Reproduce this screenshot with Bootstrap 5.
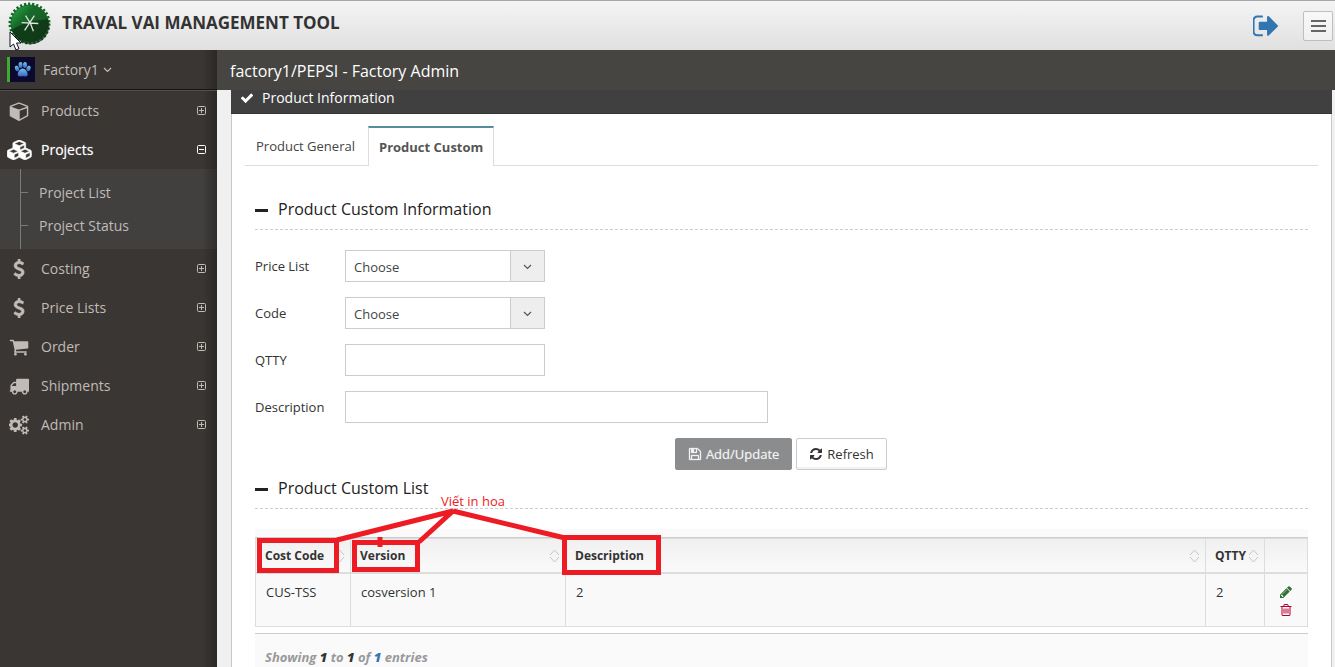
<!DOCTYPE html>
<html lang="en">
<head>
<meta charset="utf-8">
<meta name="viewport" content="width=device-width, initial-scale=1">
<title>Traval Vai Management Tool</title>
<link rel="stylesheet" href="https://cdn.jsdelivr.net/npm/bootstrap@5.3.0/dist/css/bootstrap.min.css">
<style>
body{font-family:"Open Sans",sans-serif;font-size:13px;line-height:20px;color:#333;background:#f0f0f0}
.fa-ico{width:20px;height:20px;fill:currentColor;flex:none}
.fa-ico.wide{width:26px;stroke:currentColor;stroke-width:50}
.fa-ico.mid{width:14px;height:14px}
.fa-ico.small-ico{width:12px;height:12px}
a{text-decoration:none}
.topbar{height:50px;border-top:1px solid #a5a5a5;background:linear-gradient(#f4f4f4,#e0e0e0);padding:0 2px 0 8px}
.brand-mark{width:43px;height:43px;margin-bottom:4px}
.brand-name{font-size:17px;font-weight:700;line-height:24px;color:#333;margin:0 0 6px 11px}
.pointer{position:absolute;left:9px;top:30px;width:13px;height:20px;z-index:5}
.burger{width:30px;height:30px;padding:0;border:1px solid #bfbfbf;border-radius:2px;background:linear-gradient(#f8f8f8,#f0f0f0)}
.logout{color:#3276b1}
.side{width:217px;flex:none;font-size:14px;color:#c0bbb7;background:linear-gradient(90deg,transparent 202px,#0004 217px),#3a3633}
.side a{color:inherit}
.side nav{padding-top:1px}
.user-row{height:40px;border-bottom:1px solid #161514;padding-left:7px;box-shadow:0 1px #525151}
.avatar{width:28px;height:25px;border-left:3px solid #40ac2b}
.nav-row{height:39px;padding:0 11px 0 7px;margin:0}
.nav-row .slot{width:34px;padding-left:2px}
.nav-row.on{color:#fff}
.nav-row.on .slot{padding-left:0}
.nav-row.on .txt{text-shadow:0 0 1px #fff8}
.sub{background:linear-gradient(90deg,#41403e 202px,#2f2e2d 217px);padding:7px 0;position:relative}
.sub::before{content:"";position:absolute;left:20px;top:0;bottom:0;border-left:1px solid #7a7a77}
.sub a{display:flex;align-items:center;height:33px}
.sub a::before{content:"";width:8px;margin:0 11px 0 20px;border-top:1px solid #7a7a77}
.ribbon{height:40px;background:#464542;color:#fff;font-size:16px;padding:2px 13px 0}
.panel{margin:0 3px 0 14px;border:1px solid #c8c8c8;border-width:0 1px;background:#fff}
.panel-head{height:24px;margin:0 -1px;padding:0 10px 8px 9px;font-size:14px;font-weight:400;line-height:16px;color:#fff;background:#404040;border-bottom:1px solid #363636}
.tabs{margin:12px 13px 0;border-bottom:1px solid #ddd;border-radius:0;gap:2px}
.tabs .nav-link{height:39px;padding:1px 10px 0;border-radius:0;border-width:0 1px;border-color:transparent;color:#444;margin-bottom:0;display:flex;align-items:center}
.tabs .nav-link:hover{border-color:transparent}
.tabs .nav-link.active{font-weight:700;color:#555;border-top:2px solid #568d9c;border-left-color:#ddd;border-right-color:#ddd;height:40px;padding:0 10px 1px;margin-bottom:-1px}
.inner{padding:0 23px}
.sec-head{height:39px;font-size:16px;font-weight:400;color:#222;border-bottom:1px dashed #ccc;margin:0}
.sec-head.first{margin-top:25px}
.sec-head i{width:13px;height:3px;background:#222;margin-right:10px}
.form-area{padding-top:20px}
.field{margin-bottom:15px}
.field label{width:90px;flex:none}
.box{height:32px;width:200px;border:1px solid #ccc;border-radius:0;padding:0 8px;font-size:13px;color:#444;background:#fff;appearance:none}
select.box{padding-top:2px;background:linear-gradient(90deg,#fff 164px,#ccc 164px 165px,#eee 165px)}
.box.long{width:423px}
.chev{width:9px;height:9px;fill:none;stroke:currentColor;stroke-width:1.2}
.pick .chev{position:absolute;right:13px;top:12px;color:#555;pointer-events:none}
.actions{width:60%}
.act{height:32px;font-size:13px;line-height:18px;padding:0 12px;border-radius:2px;border:1px solid #ccc;box-shadow:inset 0 -2px #0000000d;color:#333;background:#fff}
.act.save{background:#8b8c8e;border-color:#8b8c8e;color:#f2f2f2;text-shadow:0 0 1px #fff8;box-shadow:none}
.listing{position:relative}
.strip{height:8px;margin-top:20px;background:#fafafa}
.grid-t{width:100%;table-layout:fixed;border-collapse:separate;border-spacing:0;border:1px solid #ddd;border-top:1px solid #ccc;background:#f9f9f9;margin:0}
.grid-t th{height:36px;padding:0 5px 0 9px;font-size:12px;font-weight:700;border-top:1px solid #ddd;border-bottom:2px solid #ddd;background:linear-gradient(#f0f0f0,#fafafa)}
.grid-t td{height:52px;padding:8px 10px;vertical-align:top}
.grid-t th+th,.grid-t td+td{border-left:1px solid #ddd}
.sorter{width:11px;height:14px;fill:none;stroke:#c6c6c6;stroke-width:1}
.row-tools{gap:6px}
.edit{color:#356e35}
.del{color:#b5002e}
.foot{margin-top:6px;padding:13px 10px 0;border-top:1px solid #ccc;background:#fafafa;font-size:13px;font-weight:700;font-style:italic;color:#999}
.foot b{color:#333}.foot b.total{color:#3276b1}
.note{position:absolute;left:0;top:0;width:410px;height:110px;fill:none;stroke:#ed1c24;stroke-width:5;pointer-events:none}
.note-text{position:absolute;left:186px;top:21px;color:#ed1c24}
</style>
</head>
<body class="vh-100 d-flex flex-column overflow-hidden">
<svg class="d-none">
<symbol id="plus" viewBox="0 0 9 9"><path d="M1.5.5h6q1 0 1 1v6q0 1-1 1h-6q-1 0-1-1v-6q0-1 1-1zM2 4.500h5M4.500 2v5" fill="none" stroke="currentColor"/></symbol>
<symbol id="minus" viewBox="0 0 9 9"><path d="M1.500.5h6q1 0 1 1v6q0 1-1 1h-6q-1 0-1-1v-6q0-1 1-1zM2 4.500h5" fill="none" stroke="currentColor"/></symbol>
<symbol id="usd" viewBox="0 0 1792 1792"><path d="M1362 1185q0 153-99.500 263.500t-258.500 136.500v175q0 14-9 23t-23 9h-135q-13 0-22.500-9.500t-9.500-22.500v-175q-66-9-127.500-31t-101.500-44.500-74-48-46.500-37.500-17.500-18q-17-21-2-41l103-135q7-10 23-12 15-2 24 9l2 2q113 99 243 125 37 8 74 8 81 0 142.500-43t61.500-122q0-28-15-53t-33.500-42-58.500-37.500-66-32-80-32.500q-39-16-61.500-25t-61.500-26.500-62.500-31-56.500-35.500-53.500-42.500-43.500-49-35.500-58-21-66.500-8.500-78q0-138 98-242t255-134v-180q0-13 9.500-22.500t22.500-9.500h135q14 0 23 9t9 23v176q57 6 110.500 23t87 33.500 63.500 37.500 39 29 15 14q17 18 5 38l-81 146q-8 15-23 16-14 3-27-7-3-3-14.500-12t-39-26.500-58.500-32-74.500-26-85.500-11.500q-95 0-155 43t-60 111q0 26 8.500 48t29.500 41.500 39.500 33 56 31 60.500 27 70 27.500q53 20 81 31.500t76 35 75.500 42.500 62 50 53 63.500 31.500 76.500 13 94z" stroke="currentColor" stroke-width="40"/></symbol>
<symbol id="sort" viewBox="0 0 11 14"><path d="M1 6l4.500-5L10 6M1 8l4.500 5L10 8"/></symbol>
<symbol id="chev" viewBox="0 0 9 9"><path d="M1 3l3.500 3.500L8 3"/></symbol>
</svg>

<header class="topbar d-flex align-items-center flex-shrink-0 position-relative">
  <svg class="brand-mark" viewBox="-22 -22 44 44">
    <defs><linearGradient id="lg" x1="0" y1="0" x2="1" y2="1"><stop offset="0" stop-color="#35b04a"/><stop offset=".35" stop-color="#166b2b"/><stop offset=".7" stop-color="#1d5a25"/><stop offset="1" stop-color="#12421a"/></linearGradient></defs>
    <circle r="19.500" fill="url(#lg)"/><circle r="20" fill="none" stroke="#176428" stroke-width="3" stroke-dasharray="2.200 1.990"/>
    <path d="M-19 7Q-5-2 7-3T19-5A19 19 0 0 1-17 9z" fill="#0d3214" opacity=".75"/>
    <path d="M-8-1L9 0M-4-8L1 0M5-8L-5 7M1 0L4 8" stroke="#dce8dc" stroke-width="1.300"/>
  </svg>
  <svg class="pointer" viewBox="0 0 13 20"><path d="M1 1v15l3.500-3 2.500 6 3-1.300-2.500-5.700H12z" fill="#fff" stroke="#112" stroke-width="1"/></svg>
  <h1 class="brand-name">TRAVAL VAI MANAGEMENT TOOL</h1>
  <div class="ms-auto d-flex align-items-center gap-4">
    <a href="#" class="logout d-flex" aria-label="Sign out"><svg viewBox="96 200 1600 1400" width="26" height="24" fill="currentColor"><path d="M704 1440q0 4 1 20t.5 26.500-3 23.500-10 19.500-20.500 6.500h-320q-119 0-203.500-84.500t-84.500-203.500v-704q0-119 84.500-203.500t203.500-84.500h320q13 0 22.500 9.500t9.500 22.500q0 4 1 20t.5 26.500-3 23.500-10 19.500-20.500 6.500h-320q-66 0-113 47t-47 113v704q0 66 47 113t113 47h312l11.500 1 11.500 3 8 5.500 7 9 2 13.500zm928-544q0 26-19 45l-544 544q-19 19-45 19t-45-19-19-45v-288h-448q-26 0-45-19t-19-45v-384q0-26 19-45t45-19h448v-288q0-26 19-45t45-19 45 19l544 544q19 19 19 45z"/></svg></a>
    <button type="button" class="burger d-flex align-items-center justify-content-center" aria-label="Toggle menu"><svg width="15" height="12" viewBox="0 0 15 12"><path d="M0 1h15M0 6h15M0 11h15" stroke="#666" stroke-width="2"/></svg></button>
  </div>
</header>

<div class="d-flex flex-grow-1 overflow-hidden">
  <aside class="side">
    <a href="#" class="user-row d-flex align-items-center">
      <svg class="avatar" viewBox="0 0 25 25"><defs><linearGradient id="pw" x1="0" y1="0" x2="0" y2="1"><stop offset="0" stop-color="#74c4ea"/><stop offset="1" stop-color="#3a63c4"/></linearGradient></defs><path d="M0 0h25v25H0z" fill="#0c0a2c"/><g fill="url(#pw)"><ellipse cx="7" cy="11.500" rx="2" ry="2.800" transform="rotate(-20 7 11.500)"/><ellipse cx="10.500" cy="8" rx="2" ry="3"/><ellipse cx="15" cy="8" rx="2" ry="3"/><ellipse cx="18.500" cy="11.500" rx="2" ry="2.800" transform="rotate(20 18.500 11.500)"/><path d="M12.700 11.500c2.500 0 5 3.500 5 5.800 0 2.700-2.700 2-5 2s-5 .7-5-2c0-2.300 2.500-5.800 5-5.800z"/></g></svg>
      <span class="ms-2">Factory1</span><svg class="chev ms-1"><use href="#chev"/></svg>
    </a>
    <nav>
      <a href="#" class="nav-row d-flex align-items-center"><span class="slot d-flex"><svg class="fa-ico" viewBox="-64 0 1792 1792"><path d="M896 1629l640-349v-636l-640 233v752zm-64-865l698-254-698-254-698 254zm832-252v768q0 35-18 65t-49 47l-704 384q-28 16-61 16t-61-16l-704-384q-31-17-49-47t-18-65v-768q0-40 23-73t61-47l704-256q22-8 44-8t44 8l704 256q38 14 61 47t23 73z"/></svg></span><span class="txt">Products</span><svg class="ms-auto" width="9" height="9"><use href="#plus"/></svg></a>
      <a href="#" class="nav-row on d-flex align-items-center"><span class="slot d-flex"><svg class="fa-ico wide" viewBox="0 0 2304 1792"><path d="M640 1632l384-192v-314l-384 164v342zm-64-454l404-173-404-173-404 173zm1088 454l384-192v-314l-384 164v342zm-64-454l404-173-404-173-404 173zm-448-293l384-165v-266l-384 164v267zm-64-379l441-189-441-189-441 189zm1088 518v416q0 36-19 67t-52 47l-448 224q-25 14-57 14t-57-14l-448-224q-5-2-7-4-2 2-7 4l-448 224q-25 14-57 14t-57-14l-448-224q-33-16-52-47t-19-67v-416q0-38 21.500-70t56.500-48l434-186v-400q0-38 21.500-70t56.500-48l448-192q23-10 50-10t50 10l448 192q35 16 56.500 48t21.500 70v400l434 186q36 16 57 48t21 70z"/></svg></span><span class="txt">Projects</span><svg class="ms-auto" width="9" height="9"><use href="#minus"/></svg></a>
      <div class="sub"><a href="#">Project List</a><a href="#">Project Status</a></div>
      <a href="#" class="nav-row d-flex align-items-center"><span class="slot d-flex"><svg class="fa-ico"><use href="#usd"/></svg></span><span class="txt">Costing</span><svg class="ms-auto" width="9" height="9"><use href="#plus"/></svg></a>
      <a href="#" class="nav-row d-flex align-items-center"><span class="slot d-flex"><svg class="fa-ico"><use href="#usd"/></svg></span><span class="txt">Price Lists</span><svg class="ms-auto" width="9" height="9"><use href="#plus"/></svg></a>
      <a href="#" class="nav-row d-flex align-items-center"><span class="slot d-flex"><svg class="fa-ico" viewBox="0 0 1792 1792"><path d="M704 1536q0 52-38 90t-90 38-90-38-38-90 38-90 90-38 90 38 38 90zm896 0q0 52-38 90t-90 38-90-38-38-90 38-90 90-38 90 38 38 90zm128-1088v512q0 24-16.500 42.500t-40.500 21.500l-1044 122q13 60 13 70 0 16-24 64h920q26 0 45 19t19 45-19 45-45 19h-1024q-26 0-45-19t-19-45q0-11 8-31.500t16-36 21.500-40 15.500-29.500l-177-823h-204q-26 0-45-19t-19-45 19-45 45-19h256q16 0 28.500 6.500t19.500 15.500 13 24.500 8 26 5.500 29.500 4.500 26h1201q26 0 45 19t19 45z"/></svg></span><span class="txt">Order</span><svg class="ms-auto" width="9" height="9"><use href="#plus"/></svg></a>
      <a href="#" class="nav-row d-flex align-items-center"><span class="slot d-flex"><svg class="fa-ico" viewBox="0 0 1792 1792"><path d="M640 1408q0-52-38-90t-90-38-90 38-38 90 38 90 90 38 90-38 38-90zm-384-512h384v-256h-158q-13 0-22 9l-195 195q-9 9-9 22v30zm1280 512q0-52-38-90t-90-38-90 38-38 90 38 90 90 38 90-38 38-90zm256-1088v1024q0 15-4 26.500t-13.500 18.500-16.500 11.500-23.500 6-22.500 2-25.500 0-22.500-.5q0 106-75 181t-181 75-181-75-75-181h-384q0 106-75 181t-181 75-181-75-75-181h-64q-3 0-22.500.5t-25.500 0-22.500-2-23.500-6-16.500-11.500-13.500-18.500-4-26.500q0-26 19-45t45-19v-320q0-8-.5-35t0-38 2.500-34.500 6.500-37 14-30.500 22.500-30l198-198q19-19 50.500-32t58.500-13h160v-192q0-26 19-45t45-19h1024q26 0 45 19t19 45z"/></svg></span><span class="txt">Shipments</span><svg class="ms-auto" width="9" height="9"><use href="#plus"/></svg></a>
      <a href="#" class="nav-row d-flex align-items-center"><span class="slot d-flex"><svg class="fa-ico" viewBox="0 0 1856 1792"><path d="M832 896q0-106-75-181t-181-75-181 75-75 181 75 181 181 75 181-75 75-181zm768 512q0-52-38-90t-90-38-90 38-38 90q0 53 37.500 90.500t90.500 37.500 90.500-37.500 37.500-90.500zm0-1024q0-52-38-90t-90-38-90 38-38 90q0 53 37.500 90.500t90.500 37.500 90.500-37.500 37.500-90.500zm-384 421v185q0 10-7 19.500t-16 10.500l-155 24q-11 35-32 76 34 48 90 115 7 11 7 20 0 12-7 19-23 30-82.500 89.500t-78.500 59.500q-11 0-21-7l-115-90q-37 19-77 31-11 108-23 155-7 24-30 24h-186q-11 0-20-7.500t-10-17.500l-23-153q-34-10-75-31l-118 89q-7 7-20 7-11 0-21-8-144-133-144-160 0-9 7-19 10-14 41-53t47-61q-23-44-35-82l-152-24q-10-1-17-9.500t-7-19.500v-185q0-10 7-19.500t16-10.500l155-24q11-35 32-76-34-48-90-115-7-11-7-20 0-12 7-20 22-30 82-89t79-59q11 0 21 7l115 90q34-18 77-32 11-108 23-154 7-24 30-24h186q11 0 20 7.500t10 17.500l23 153q34 10 75 31l118-89q8-7 20-7 11 0 21 8 144 133 144 160 0 8-7 19-12 16-42 54t-45 60q23 48 34 82l152 23q10 2 17 10.500t7 19.500zm640 533v140q0 16-149 31-12 27-30 52 51 113 51 138 0 4-4 7-122 71-124 71-8 0-46-47t-52-68q-20 2-30 2t-30-2q-14 21-52 68t-46 47q-2 0-124-71-4-3-4-7 0-25 51-138-18-25-30-52-149-15-149-31v-140q0-16 149-31 13-29 30-52-51-113-51-138 0-4 4-7 4-2 35-20t59-34 30-16q8 0 46 46.500t52 67.500q20-2 30-2t30 2q51-71 92-112l6-2q4 0 124 70 4 3 4 7 0 25-51 138 17 23 30 52 149 15 149 31zm0-1024v140q0 16-149 31-12 27-30 52 51 113 51 138 0 4-4 7-122 71-124 71-8 0-46-47t-52-68q-20 2-30 2t-30-2q-14 21-52 68t-46 47q-2 0-124-71-4-3-4-7 0-25 51-138-18-25-30-52-149-15-149-31v-140q0-16 149-31 13-29 30-52-51-113-51-138 0-4 4-7 4-2 35-20t59-34 30-16q8 0 46 46.500t52 67.500q20-2 30-2t30 2q51-71 92-112l6-2q4 0 124 70 4 3 4 7 0 25-51 138 17 23 30 52 149 15 149 31z"/></svg></span><span class="txt">Admin</span><svg class="ms-auto" width="9" height="9"><use href="#plus"/></svg></a>
    </nav>
  </aside>

  <main class="flex-grow-1 d-flex flex-column overflow-hidden">
    <div class="ribbon d-flex align-items-center flex-shrink-0">factory1/PEPSI - Factory Admin</div>
    <section class="panel flex-grow-1 d-flex flex-column">
      <h2 class="panel-head d-flex align-items-center mb-0"><svg class="fa-ico mid me-2" viewBox="0 0 1792 1792"><path d="M1671 566q0 40-28 68l-724 724-136 136q-28 28-68 28t-68-28l-136-136-362-362q-28-28-28-68t28-68l136-136q28-28 68-28t68 28l294 295 656-657q28-28 68-28t68 28l136 136q28 28 28 68z"/></svg>Product Information</h2>
      <ul class="nav nav-tabs tabs">
        <li class="nav-item"><a class="nav-link" href="#">Product General</a></li>
        <li class="nav-item"><a class="nav-link active" href="#" aria-current="page">Product Custom</a></li>
      </ul>
      <div class="inner flex-grow-1 d-flex flex-column">
        <h3 class="sec-head first d-flex align-items-center"><i></i>Product Custom Information</h3>
        <form class="form-area">
          <div class="field d-flex align-items-center"><label for="price">Price List</label><div class="pick position-relative"><select id="price" class="box"><option>Choose</option></select><svg class="chev"><use href="#chev"/></svg></div></div>
          <div class="field d-flex align-items-center"><label for="code">Code</label><div class="pick position-relative"><select id="code" class="box"><option>Choose</option></select><svg class="chev"><use href="#chev"/></svg></div></div>
          <div class="field d-flex align-items-center"><label for="qty">QTTY</label><input id="qty" type="text" class="box"></div>
          <div class="field d-flex align-items-center"><label for="desc">Description</label><input id="desc" type="text" class="box long"></div>
          <div class="actions d-flex justify-content-end gap-1">
            <button type="button" class="act save d-flex align-items-center"><svg class="fa-ico mid me-1" viewBox="0 0 1792 1792"><path stroke="currentColor" stroke-width="40" d="M512 1536h768v-384h-768v384zm896 0h128v-896q0-14-10-38.500t-20-34.500l-281-281q-10-10-34-20t-39-10v416q0 40-28 68t-68 28h-576q-40 0-68-28t-28-68v-416h-128v1280h128v-416q0-40 28-68t68-28h832q40 0 68 28t28 68v416zm-384-928v-320q0-13-9.500-22.500t-22.500-9.500h-192q-13 0-22.500 9.500t-9.500 22.500v320q0 13 9.500 22.500t22.500 9.500h192q13 0 22.500-9.500t9.500-22.500zm640 32v928q0 40-28 68t-68 28h-1344q-40 0-68-28t-28-68v-1344q0-40 28-68t68-28h928q40 0 88 20t76 48l280 280q28 28 48 76t20 88z"/></svg>Add/Update</button>
            <button type="button" class="act d-flex align-items-center"><svg class="fa-ico mid me-1" viewBox="0 0 1792 1792"><path d="M1639 1056q0 5-1 7-64 268-268 434.500t-478 166.500q-146 0-282.500-55t-243.500-157l-129 129q-19 19-45 19t-45-19-19-45v-448q0-26 19-45t45-19h448q26 0 45 19t19 45-19 45l-137 137q71 66 161 102t187 36q134 0 250-65t186-179q11-17 53-117 8-23 30-23h192q13 0 22.500 9.500t9.500 22.500zm25-800v448q0 26-19 45t-45 19h-448q-26 0-45-19t-19-45 19-45l138-138q-148-137-349-137-134 0-250 65t-186 179q-11 17-53 117-8 23-30 23h-199q-13 0-22.500-9.500t-9.500-22.500v-7q65-268 270-434.500t480-166.500q146 0 284 55.500t245 156.500l130-129q19-19 45-19t45 19 19 45z"/></svg>Refresh</button>
          </div>
        </form>
        <div class="listing flex-grow-1 d-flex flex-column">
          <h3 class="sec-head d-flex align-items-center"><i></i>Product Custom List</h3>
          <div class="strip"></div>
          <table class="grid-t">
            <colgroup><col style="width:94px"><col style="width:215px"><col><col style="width:59px"><col style="width:43px"></colgroup>
            <thead><tr>
              <th><span class="d-flex align-items-center justify-content-between">Cost Code<svg class="sorter"><use href="#sort"/></svg></span></th>
              <th><span class="d-flex align-items-center justify-content-between">Version<svg class="sorter"><use href="#sort"/></svg></span></th>
              <th><span class="d-flex align-items-center justify-content-between">Description<svg class="sorter"><use href="#sort"/></svg></span></th>
              <th><span class="d-flex align-items-center justify-content-between">QTTY<svg class="sorter"><use href="#sort"/></svg></span></th>
              <th></th>
            </tr></thead>
            <tbody><tr><td>CUS-TSS</td><td>cosversion 1</td><td>2</td><td>2</td>
              <td class="px-0"><div class="row-tools d-flex flex-column align-items-center pt-1">
                <a href="#" class="edit d-flex" aria-label="Edit"><svg class="fa-ico small-ico" viewBox="128 128 1536 1536"><path d="M491 1536l91-91-235-235-91 91v107h128v128h107zm523-928q0-22-22-22-10 0-17 7l-542 542q-7 7-7 17 0 22 22 22 10 0 17-7l542-542q7-7 7-17zm-54-192l416 416-832 832h-416v-416zm683 96q0 53-37 90l-166 166-416-416 166-165q36-38 90-38 53 0 91 38l235 234q37 39 37 91z"/></svg></a>
                <a href="#" class="del d-flex" aria-label="Delete"><svg class="fa-ico small-ico" viewBox="128 128 1536 1536"><path d="M704 736v576q0 14-9 23t-23 9h-64q-14 0-23-9t-9-23v-576q0-14 9-23t23-9h64q14 0 23 9t9 23zm256 0v576q0 14-9 23t-23 9h-64q-14 0-23-9t-9-23v-576q0-14 9-23t23-9h64q14 0 23 9t9 23zm256 0v576q0 14-9 23t-23 9h-64q-14 0-23-9t-9-23v-576q0-14 9-23t23-9h64q14 0 23 9t9 23zm128 724v-948h-896v948q0 22 7 40.500t14.500 27 10.500 8.500h832q3 0 10.500-8.500t14.500-27 7-40.500zm-672-1076h448l-48-117q-7-9-17-11h-317q-10 2-17 11zm928 32v64q0 14-9 23t-23 9h-96v948q0 83-47 143.500t-113 60.500h-832q-66 0-113-58.500t-47-141.500v-952h-96q-14 0-23-9t-9-23v-64q0-14 9-23t23-9h309l70-167q15-37 54-63t79-26h320q40 0 79 26t54 63l70 167h309q14 0 23 9t9 23z"/></svg></a>
              </div></td></tr></tbody>
          </table>
          <div class="foot flex-grow-1">Showing <b>1</b> to <b>1</b> of <b class="total">1</b> entries</div>
          <svg class="note" viewBox="0 0 410 110"><path d="M4.500 70.500h77v30h-77zM99.500 72.500h63v27h-63zM309.500 67.500h94v35h-94zM125 67v10M82 70L198 41L164 72M198 41L310 68"/></svg>
          <span class="note-text">Viết in hoa</span>
        </div>
      </div>
    </section>
  </main>
</div>
<script src="https://cdn.jsdelivr.net/npm/bootstrap@5.3.0/dist/js/bootstrap.bundle.min.js"></script>
</body>
</html>
